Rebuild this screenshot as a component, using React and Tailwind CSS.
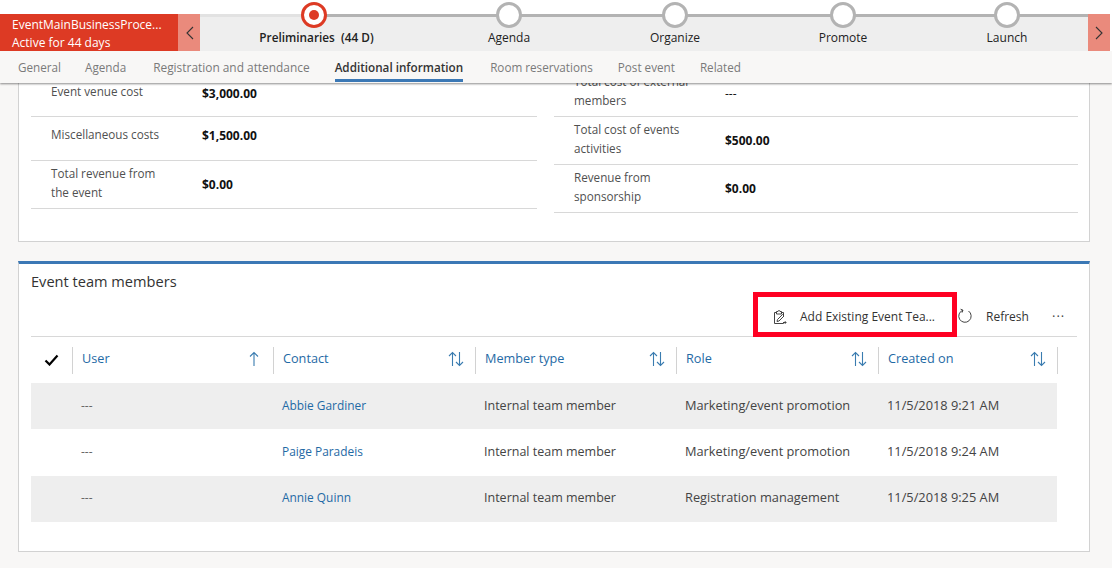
const font = { fontFamily: '"Open Sans", "Noto Sans", sans-serif' };

const steps = [
  { label: "Preliminaries  (44 D)", w: "w-[228px]", active: true },
  { label: "Agenda", w: "w-[162px]" },
  { label: "Organize", w: "w-[170px]" },
  { label: "Promote", w: "w-[166px]" },
  { label: "Launch", w: "w-[162px]" },
];
const tabs = [
  { t: "General", c: "" },
  { t: "Agenda", c: "ml-[-1px]" },
  { t: "Registration and attendance", c: "ml-[2px] text-[11.9px]" },
  { t: "Additional information", c: "" },
  { t: "Room reservations", c: "ml-[2px]" },
  { t: "Post event", c: "" },
  { t: "Related", c: "" },
];
const cols = ["User", "Contact", "Member type", "Role", "Created on"];
const rows = [
  { cells: ["Abbie Gardiner", "Marketing/event promotion", "11/5/2018 9:21 AM"], c: "h-[46px] bg-[#eeeeee]" },
  { cells: ["Paige Paradeis", "Marketing/event promotion", "11/5/2018 9:24 AM"], c: "h-[47px] pb-[1px] bg-white" },
  { cells: ["Annie Quinn", "Registration management", "11/5/2018 9:25 AM"], c: "h-[46px] pb-[2px] bg-[#eeeeee]" },
];
const GRID = "grid grid-cols-[42px_201px_202px_201px_202px_179px]";

function Chevron({ dir }) {
  return (
    <svg width="9" height="14" viewBox="0 0 9 14" fill="none" stroke="#333" strokeWidth="1.1">
      <path d={dir === "left" ? "M8 1L2 7l6 6" : "M1 1l6 6-6 6"} />
    </svg>
  );
}

function SortIcon({ onlyUp }) {
  return (
    <svg width="16" height="16" viewBox="0 0 16 16" fill="none" stroke="#3a7cb0" strokeWidth="1.1">
      {onlyUp ? (
        <path d="M8 15V1.5M4 5.5l4-4 4 4" />
      ) : (
        <>
          <path d="M4.5 15V1.5M1 5l3.5-3.5L8 5" />
          <path d="M11.5 1v13.5M8 11l3.5 3.5L15 11" />
        </>
      )}
    </svg>
  );
}

function Row({ label, value, h, vc = "font-bold" }) {
  return (
    <div className={`flex items-center border-b border-[#d8d8d8] ${h}`}>
      <div className="mt-[-3px] w-[171px] shrink-0 pl-5 pr-[30px] text-[11.7px] leading-[19px] text-[#505050]">{label}</div>
      <div className={`text-[12px] text-[#111] ${vc}`}>{value}</div>
    </div>
  );
}

export default function App() {
  return (
    <div style={font} className="flex h-[568px] w-[1112px] flex-col overflow-hidden bg-[#f8f7f6]">
      <header className="relative z-10 shrink-0 shadow-[0_1px_2px_rgba(0,0,0,0.45)]">
        <div className="h-[14px] bg-white" />
        <div className="relative flex h-[37px] bg-white pr-[2px]">
          <div className="flex w-[178px] flex-col justify-center bg-[#dd3a24] pl-[12px] pt-[2px] text-[12px] leading-[18px] text-white">
            <div>EventMainBusinessProce...</div>
            <div>Active for 44 days</div>
          </div>
          <div className="flex w-[22px] items-center justify-center bg-[#ea8a7c]"><Chevron dir="left" /></div>
          <div className="relative flex flex-1 bg-[#eeeeee]">
            <div className="absolute left-0 top-0 h-[3px] w-[114px] bg-[#e2e2e2]" />
            <div className="absolute left-[114px] right-0 top-0 h-[3px] bg-[#b3b3b3]" />
            {steps.map((s) => (
              <div key={s.label} className={`relative flex h-full flex-col items-center ${s.w}`}>
                <div className={`absolute top-[-12px] flex h-[26px] w-[26px] items-center justify-center rounded-full border-[3px] bg-white ${s.active ? "border-[#dd3a24]" : "border-[#b3b3b3]"}`}>
                  {s.active && <div className="h-[10px] w-[10px] rounded-full bg-[#dd3a24]" />}
                </div>
                <div className={`mt-[15px] whitespace-pre leading-[17px] text-[#222] ${s.active ? "pl-[5px] text-[11.8px] font-semibold" : "text-[12px]"}`}>{s.label}</div>
              </div>
            ))}
          </div>
          <div className="flex w-[22px] items-center justify-center bg-[#ea8a7c]"><Chevron dir="right" /></div>
        </div>
        <nav className="flex h-[32px] gap-[25px] bg-[#f8f7f6] pl-[18px]">
          {tabs.map(({ t, c }) => {
            const on = t === "Additional information";
            return (
              <div key={t} className={`h-[31px] whitespace-nowrap pt-[7px] text-[11.7px] leading-[18px] ${c} ${on ? "border-b-[3px] border-[#3b78b5] font-semibold text-[#333]" : "text-[#7a7a7a]"}`}>{t}</div>
            );
          })}
        </nav>
      </header>

      <main className="flex min-h-0 flex-1 flex-col overflow-hidden pl-[18px]">
        <section className="mt-[-30px] h-[189px] w-[1072px] shrink-0 border border-[#d2d2d2] bg-white pl-3 pr-[11px]">
          <div className="grid grid-cols-[506px_524px] gap-x-[17px] pt-[15px]">
            <div>
              <Row label="Event venue cost" value="$3,000.00" h="h-[48px]" vc="mt-[2px] font-bold" />
              <Row label="Miscellaneous costs" value="$1,500.00" h="h-[44px] pb-[6px]" />
              <Row label="Total revenue from the event" value="$0.00" h="h-[48px]" />
            </div>
            <div>
              <Row label="Total cost of external members" value="---" h="h-[48px]" vc="mt-[2px] font-normal" />
              <Row label="Total cost of events activities" value="$500.00" h="h-[48px]" />
              <Row label="Revenue from sponsorship" value="$0.00" h="h-[48px]" />
            </div>
          </div>
        </section>

        <section className="mt-[19px] h-[291px] w-[1072px] shrink-0 border border-t-[3px] border-[#d2d2d2] border-t-[#3b78b5] bg-white pl-3">
          <h2 className="pt-[7px] text-[14.6px] leading-[20px] text-[#333]">Event team members</h2>
          <div className="relative mr-[12px] mt-[1px] flex h-[45px] items-center justify-end border-b border-[#d8d8d8] text-[12px] text-[#333]">
            <div className="absolute left-[722px] top-0 flex h-[45px] w-[204px] items-center border-[5px] border-[#ff0022] pl-[15px] pt-[5px]">
              <svg width="14" height="14" viewBox="0 0 14 14" fill="none" stroke="#444" strokeWidth="1">
                <path d="M3 2.5H1.5v11h9V12M9 2.5h1.5V6" />
                <path d="M3.5 1.5h1.5a1 1 0 0 1 2 0h1.5V4h-5z" />
                <path d="M4 11.5l.5-2 5-5 1.5 1.5-5 5z" />
                <path d="M11 12.5h2.5M12.2 11.2v2.6" />
              </svg>
              <span className="ml-[13px] whitespace-nowrap">Add Existing Event Tea...</span>
            </div>
            <svg width="16" height="16" viewBox="0 0 16 16" fill="none" stroke="#444" strokeWidth="1" className="absolute left-[926px] top-[16px]">
              <path d="M6 2.2A6.2 6.2 0 1 0 11.5 3" />
              <path d="M3.6 1.2L6 2.2 5 4.6" />
            </svg>
            <span className="absolute left-[955px] top-[16px] leading-[18px]">Refresh</span>
            <span className="absolute left-[1021px] top-[15px] text-[13px] leading-[18px] tracking-[1px] text-[#444]">···</span>
          </div>

          <div className={`${GRID} h-[46px] items-center`}>
            <div className="flex h-[27px] items-center justify-center border-r border-[#d2d2d2] pb-[1px]">
              <svg width="15" height="12" viewBox="0 0 15 12" fill="none" stroke="#000" strokeWidth="2.2"><path d="M1.5 6.5l4 4 8-9" /></svg>
            </div>
            {cols.map((c, i) => (
              <div key={c} className="flex h-[27px] items-center justify-between border-r border-[#d2d2d2] pb-[2px] pl-[9px] pr-[11px] text-[12.7px] text-[#1f6aa5]">
                <span>{c}</span>
                <SortIcon onlyUp={i === 0} />
              </div>
            ))}
          </div>

          {rows.map(({ cells, c }) => (
            <div key={cells[0]} className={`${GRID} w-[1026px] items-center text-[#444] ${c}`}>
              <div />
              <div className="pl-[8px] text-[12px] text-[#666]">---</div>
              <div className="pl-[8px] text-[11.9px] text-[#1f6aa5]">{cells[0]}</div>
              <div className="pl-[8px] text-[12.5px]">Internal team member</div>
              <div className="pl-[8px] text-[12.8px]">{cells[1]}</div>
              <div className="pl-[8px] text-[12.8px]">{cells[2]}</div>
            </div>
          ))}
        </section>
      </main>
    </div>
  );
}
